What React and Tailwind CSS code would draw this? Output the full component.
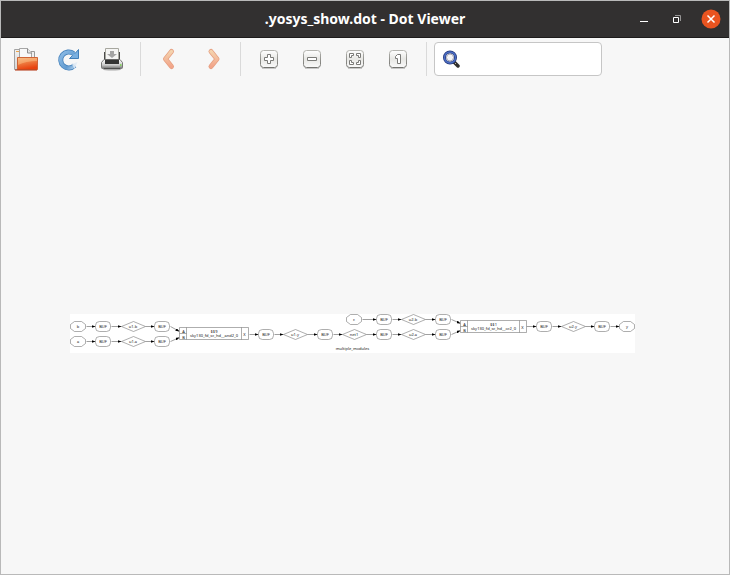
import React from "react";

function OpenIcon() {
  return (
    <svg width="26" height="26" viewBox="0 0 26 26">
      <defs>
        <linearGradient id="folder" x1="0" y1="0" x2="0.3" y2="1">
          <stop offset="0" stopColor="#f3b27c" />
          <stop offset="0.45" stopColor="#ee8145" />
          <stop offset="1" stopColor="#e8430f" />
        </linearGradient>
        <linearGradient id="folderBack" x1="0" y1="0" x2="0" y2="1">
          <stop offset="0" stopColor="#f2f2f2" />
          <stop offset="1" stopColor="#d5d5d5" />
        </linearGradient>
      </defs>
      <path d="M1.5 3.5h5l1 2v18h-6z" fill="url(#folderBack)" stroke="#a3a3a3" />
      <path d="M3 5.5h3" stroke="#eca64f" />
      <path d="M12 5.500h9.500v9H12z" fill="#efefef" stroke="#999" />
      <path d="M6.500 2.500h8l4 4v9h-12z" fill="#f8f8f8" stroke="#a5a5a5" />
      <path d="M14.500 2.500v4.500h4.500" fill="#e5e5e5" stroke="#8c8c8c" />
      <path d="M4.500 11.500h20v12h-20z" fill="url(#folder)" stroke="#cf6537" />
      <path d="M5 12h19v3q-11 0-19 4z" fill="#ffd49b" opacity=".4" />
      <path d="M2 24h22" stroke="#b3310c" />
    </svg>
  );
}

function ReloadIcon() {
  return (
    <svg width="24" height="24" viewBox="0 0 24 24">
      <defs>
        <linearGradient id="reload" x1="0" y1="0" x2="1" y2="1">
          <stop offset="0" stopColor="#8dbce6" />
          <stop offset="0.7" stopColor="#629bd0" />
          <stop offset="1" stopColor="#a9cbea" />
        </linearGradient>
      </defs>
      <path d="M17.500 18.500A8 8 0 1 1 16.500 6.500" fill="none" stroke="#427fb9" strokeWidth="5" />
      <path d="M21.500 2.500v9h-9l3-3-1-2.500h4z" fill="#79afe0" stroke="#427fb9" />
      <path d="M17.500 18.500A8 8 0 1 1 17 7" fill="none" stroke="url(#reload)" strokeWidth="3.500" />
      <path d="M15 17l5.500-2-3 7z" fill="#dfeaf5" opacity=".85" />
    </svg>
  );
}

function PrintIcon() {
  return (
    <svg width="24" height="24" viewBox="0 0 24 24">
      <defs>
        <linearGradient id="printer" x1="0" y1="0" x2="0" y2="1">
          <stop offset="0" stopColor="#fff" />
          <stop offset="0.6" stopColor="#ccc" />
          <stop offset="1" stopColor="#707070" />
        </linearGradient>
      </defs>
      <ellipse cx="12" cy="22.500" rx="9" ry="1" fill="#aaa" />
      <path d="M4 5h16v8H4z" fill="#4b4b4b" />
      <path d="M5.500 1.500h13v11h-13z" fill="#f5f5f4" stroke="#a7a79f" />
      <path d="M10 4h4v3h3l-5 4-5-4h3z" fill="#a4a4a4" />
      <path d="M4 12.500h16l2.500 3v5q0 1-1 1h-19q-1 0-1-1v-5z" fill="url(#printer)" stroke="#777" />
      <path d="M5 12h14v5H5z" fill="#343434" />
      <path d="M5 12.500h14" stroke="#666" />
      <path d="M4 21.500h16" stroke="#4d4d4d" />
      <path d="M20 18h1.500" stroke="#72d842" strokeWidth="1.500" />
    </svg>
  );
}

function ChevronIcon({ right }) {
  const d = right ? "M11 4.500l6 7.500-6 7.500" : "M14.500 4.500L8.500 12l6 7.500";
  return (
    <svg width="24" height="24" viewBox="0 0 24 24">
      <defs>
        <linearGradient id="chevron" x1="0" y1="0" x2="0" y2="1">
          <stop offset="0" stopColor="#f4d3ae" />
          <stop offset="1" stopColor="#f2a58a" />
        </linearGradient>
      </defs>
      <path d={d} fill="none" stroke="#e6a082" strokeWidth="5" strokeLinecap="round" strokeLinejoin="round" />
      <path d={d} fill="none" stroke="url(#chevron)" strokeWidth="3.500" strokeLinecap="round" strokeLinejoin="round" />
    </svg>
  );
}

function KeyIcon({ children }) {
  return (
    <svg width="24" height="24" viewBox="0 0 24 24">
      <defs>
        <linearGradient id="key" x1="0" y1="0" x2="0" y2="1">
          <stop offset="0" stopColor="#fff" />
          <stop offset="0.5" stopColor="#e7e7e4" />
          <stop offset="1" stopColor="#fafafa" />
        </linearGradient>
        <linearGradient id="keyEdge" x1="0" y1="0" x2="0" y2="1">
          <stop offset="0" stopColor="#b5b5b0" />
          <stop offset="1" stopColor="#747470" />
        </linearGradient>
      </defs>
      <path d="M5 21.500h14" stroke="#c8c8c8" />
      <rect x="3.500" y="3.500" width="17" height="17" rx="3" fill="url(#key)" stroke="url(#keyEdge)" />
      <g fill="#fff" stroke="#7b7b78">{children}</g>
    </svg>
  );
}

function SearchIcon() {
  return (
    <svg width="18" height="18" viewBox="0 0 18 18" className="shrink-0">
      <path d="M11 12l4 4" stroke="#302f2d" strokeWidth="3.500" strokeLinecap="round" />
      <path d="M12 13l1 1" stroke="#bdb5a9" />
      <circle cx="7" cy="7.500" r="5.500" fill="#f4f4f7" stroke="#263879" strokeWidth="3" />
      <circle cx="7" cy="7.500" r="5.500" fill="none" stroke="#4a6dc4" strokeWidth="1.500" />
      <circle cx="7" cy="7.500" r="3.500" fill="none" stroke="#a9a9b4" />
    </svg>
  );
}

function ToolButton({ label, children }) {
  return (
    <button type="button" aria-label={label} className="flex h-[34px] w-[43px] shrink-0 items-center justify-center pr-0.5">
      {children}
    </button>
  );
}

function Separator() {
  return <div className="ml-1.5 mr-[7px] h-[34px] w-px shrink-0 bg-[#dadada]" />;
}

const buffers = [
  [103, 326], [162, 326], [103, 341], [162, 341], [266, 334], [325, 334],
  [384, 319], [443, 319], [384, 334], [443, 334], [544, 326], [602, 326],
];
const diamonds = [
  [133, 326, "u1.b"], [133, 341, "u1.a"], [295, 334, "u1.y"], [354, 334, "net1"],
  [413, 319, "u2.b"], [413, 334, "u2.a"], [573, 326, "u2.y"],
];
const ports = [[78, 326, "b"], [78, 341, "a"], [354, 319, "c"], [627, 326, "y"]];
const cells = [
  { x: 179, y: 327, w: 69, name: "$$9", type: "sky130_fd_sc_hd__and2_0" },
  { x: 460, y: 320, w: 66, name: "$$1", type: "sky130_fd_sc_hd__or2_0" },
];
const edges = [
  [86, 326, 95, 326], [111, 326, 121, 326], [145, 326, 154, 326],
  [86, 341, 95, 341], [111, 341, 121, 341], [145, 341, 154, 341],
  [170, 326, 179, 331], [170, 341, 179, 337],
  [249, 334, 258, 334], [274, 334, 283, 334], [307, 334, 317, 334],
  [333, 334, 342, 334], [366, 334, 376, 334], [392, 334, 401, 334], [425, 334, 435, 334],
  [362, 319, 376, 319], [392, 319, 401, 319], [425, 319, 435, 319],
  [451, 319, 460, 323], [451, 334, 460, 330],
  [526, 326, 536, 326], [552, 326, 561, 326], [585, 326, 594, 326], [610, 326, 619, 326],
];

function Graph() {
  return (
    <svg
      width="565"
      height="39"
      viewBox="70 314 565 39"
      className="shrink-0 bg-white"
      fontFamily="'Noto Sans', 'Open Sans', sans-serif"
      fontSize="4"
      textAnchor="middle"
      role="img"
      aria-label="multiple_modules"
    >
      <defs>
        <marker id="arrow" viewBox="0 0 4 3" refX="4" refY="1.500" markerWidth="4" markerHeight="3" markerUnits="userSpaceOnUse" orient="auto">
          <path d="M0 0L4 1.500L0 3z" fill="#000" />
        </marker>
      </defs>
      <g transform="translate(0.500 0.500)">
        <g stroke="#777" strokeWidth="0.700">
          {edges.map(([x1, y1, x2, y2], i) => (
            <line key={i} x1={x1} y1={y1} x2={x2} y2={y2} markerEnd="url(#arrow)" />
          ))}
        </g>
        <g fill="#fff" stroke="#777" strokeWidth="0.600">
          {buffers.map(([x, y], i) => (
            <rect key={i} x={x - 8} y={y - 5} width="15" height="10" rx="4" />
          ))}
          {ports.map(([x, y]) => (
            <path key={`${x}-${y}`} d={`M${x - 8} ${y - 2}l4-3h7l4 3v4l-4 3h-7l-4-3z`} />
          ))}
          {diamonds.map(([x, y]) => (
            <path key={`${x}-${y}`} d={`M${x - 12} ${y}l12-5 12 5-12 5z`} />
          ))}
          {cells.map((c) => (
            <path
              key={c.name}
              d={`M${c.x} ${c.y}h${c.w}v12h-${c.w}zM${c.x + 7} ${c.y}v12M${c.x} ${c.y + 6}h7M${c.x + c.w - 7} ${c.y}v12`}
            />
          ))}
        </g>
        <g fill="#111">
          {buffers.map(([x, y], i) => (
            <text key={i} x={x - 0.5} y={y + 1}>BUF</text>
          ))}
          {[...ports, ...diamonds].map(([x, y, label]) => (
            <text key={label} x={x - 0.5} y={y + 1}>{label}</text>
          ))}
          {cells.map((c) => (
            <g key={c.name}>
              <text x={c.x + 4} y={c.y + 5}>A</text>
              <text x={c.x + 4} y={c.y + 11}>B</text>
              <text x={c.x + c.w - 4} y={c.y + 8}>X</text>
              <text x={c.x + c.w / 2} y={c.y + 5}>{c.name}</text>
              <text x={c.x + c.w / 2} y={c.y + 9}>{c.type}</text>
            </g>
          ))}
          <text x="352" y="349">multiple_modules</text>
        </g>
      </g>
    </svg>
  );
}

export default function App() {
  return (
    <div className="flex min-h-screen flex-col border border-[#b9b9b9] bg-[#f7f7f7] font-['Noto_Sans','Open_Sans',sans-serif]">
      <header className="grid h-[37px] shrink-0 grid-cols-[1fr_auto_1fr] items-center border-b border-[#1d1b1b] bg-[#323030]">
        <h1 className="col-start-2 text-sm font-bold text-white">.yosys_show.dot - Dot Viewer</h1>
        <div className="flex items-center justify-end gap-3.5 pr-2">
          <button type="button" aria-label="Minimize" className="flex size-5 items-center justify-center">
            <svg width="20" height="20" viewBox="0 0 20 20">
              <path d="M7 12.500h8" stroke="#fff" />
            </svg>
          </button>
          <button type="button" aria-label="Restore" className="flex size-5 items-center justify-center">
            <svg width="20" height="20" viewBox="0 0 20 20" fill="none">
              <path d="M8 6.500h5.500v5.500" stroke="#969595" />
              <path d="M6.500 8.500h5v5h-5z" stroke="#fff" />
            </svg>
          </button>
          <button type="button" aria-label="Close" className="flex size-5 items-center justify-center">
            <svg width="20" height="20" viewBox="0 0 20 20">
              <circle cx="10" cy="10" r="9.500" fill="#e95420" />
              <path d="M6.500 6.500l7 7m0-7l-7 7" stroke="#fff" strokeWidth="1.500" />
            </svg>
          </button>
        </div>
      </header>

      <div className="flex shrink-0 items-center py-1 pl-1">
        <ToolButton label="Open"><OpenIcon /></ToolButton>
        <ToolButton label="Reload"><ReloadIcon /></ToolButton>
        <ToolButton label="Print"><PrintIcon /></ToolButton>
        <Separator />
        <ToolButton label="Back"><ChevronIcon /></ToolButton>
        <ToolButton label="Forward"><ChevronIcon right /></ToolButton>
        <Separator />
        <ToolButton label="Zoom in">
          <KeyIcon><path d="M10.500 7.500h3v3h3v3h-3v3h-3v-3h-3v-3h3z" /></KeyIcon>
        </ToolButton>
        <ToolButton label="Zoom out">
          <KeyIcon><path d="M7.500 10.500h9v3h-9z" /></KeyIcon>
        </ToolButton>
        <ToolButton label="Zoom to fit">
          <KeyIcon>
            <path d="M6.500 6.500h4v2h-2v2h-2zM17.500 6.500h-4v2h2v2h2zM6.500 17.500h4v-2h-2v-2h-2zM17.500 17.500h-4v-2h2v-2h2z" />
          </KeyIcon>
        </ToolButton>
        <ToolButton label="Zoom 100%">
          <KeyIcon><path d="M11.500 7.500h3v9h-3v-5h-2v-2z" /></KeyIcon>
        </ToolButton>
        <Separator />
        <label className="flex h-[34px] w-[168px] items-center gap-2 rounded border border-[#c6c6c6] bg-white px-2">
          <SearchIcon />
          <input type="text" aria-label="Find" className="w-full min-w-0 bg-transparent text-sm outline-none" />
        </label>
      </div>

      <main className="flex grow items-center pt-3 pl-[69px]">
        <Graph />
      </main>
    </div>
  );
}
